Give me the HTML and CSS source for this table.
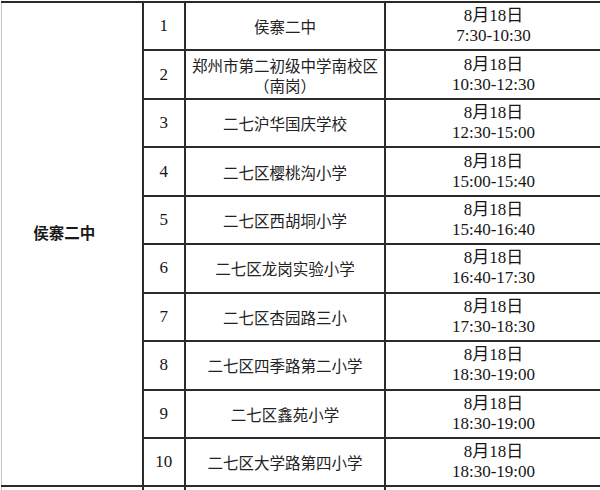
FILE: index.html
```html
<!DOCTYPE html>
<html lang="zh-CN">
<head>
<meta charset="utf-8">
<title>侯寨二中</title>
<link rel="stylesheet" href="styles.css">
</head>
<body>
<table class="sheet">
  <colgroup>
    <col class="c-area">
    <col class="c-no">
    <col class="c-school">
    <col class="c-time">
  </colgroup>
  <tbody>
    <tr>
      <td class="area" rowspan="10"><span class="area-name">侯寨二中</span></td>
      <td class="no">1</td>
      <td class="school">侯寨二中</td>
      <td class="time">8月18日<br>7:30-10:30</td>
    </tr>
    <tr>
      <td class="no">2</td>
      <td class="school">郑州市第二初级中学南校区<br>（南岗）</td>
      <td class="time">8月18日<br>10:30-12:30</td>
    </tr>
    <tr>
      <td class="no">3</td>
      <td class="school">二七沪华国庆学校</td>
      <td class="time">8月18日<br>12:30-15:00</td>
    </tr>
    <tr>
      <td class="no">4</td>
      <td class="school">二七区樱桃沟小学</td>
      <td class="time">8月18日<br>15:00-15:40</td>
    </tr>
    <tr>
      <td class="no">5</td>
      <td class="school">二七区西胡垌小学</td>
      <td class="time">8月18日<br>15:40-16:40</td>
    </tr>
    <tr>
      <td class="no">6</td>
      <td class="school">二七区龙岗实验小学</td>
      <td class="time">8月18日<br>16:40-17:30</td>
    </tr>
    <tr>
      <td class="no">7</td>
      <td class="school">二七区杏园路三小</td>
      <td class="time">8月18日<br>17:30-18:30</td>
    </tr>
    <tr>
      <td class="no">8</td>
      <td class="school">二七区四季路第二小学</td>
      <td class="time">8月18日<br>18:30-19:00</td>
    </tr>
    <tr>
      <td class="no">9</td>
      <td class="school">二七区鑫苑小学</td>
      <td class="time">8月18日<br>18:30-19:00</td>
    </tr>
    <tr>
      <td class="no">10</td>
      <td class="school">二七区大学路第四小学</td>
      <td class="time">8月18日<br>18:30-19:00</td>
    </tr>
    <tr class="next">
      <td class="area"></td>
      <td class="no"></td>
      <td class="school"></td>
      <td class="time"></td>
    </tr>
  </tbody>
</table>
</body>
</html>
```
FILE: styles.css
```css
html, body {
  margin: 0;
  padding: 0;
  background: #ffffff;
  width: 600px;
  height: 490px;
  overflow: hidden;
}

.sheet {
  border-collapse: collapse;
  table-layout: fixed;
  width: 601px;
  margin: 1px 0 0 1px;
  font-family: "Liberation Serif", "Noto Sans CJK SC", serif;
  color: #161616;
}

.c-area { width: 141px; }
.c-no { width: 42.5px; }
.c-school { width: 200px; }
.c-time { width: 217px; }

.sheet tr {
  height: 48.45px;
}

.sheet td {
  border: 2px solid #2a2a2a;
  padding: 0;
  text-align: center;
  vertical-align: middle;
}

.sheet td.area {
  border-left: 1px solid #c4c4c4;
  padding: 0 15px 24px 0;
}

.area-name {
  font-family: "Noto Sans CJK SC", sans-serif;
  font-weight: 700;
  font-size: 15.5px;
  color: #1a1a1a;
}

.no {
  font-size: 17px;
  padding-top: 3px;
}

.school {
  font-family: "Noto Sans CJK SC", sans-serif;
  font-size: 15.5px;
  line-height: 20px;
  color: #222;
  padding-top: 1px;
}

.time {
  font-size: 17px;
  line-height: 20px;
  padding-top: 6px;
}

.time, .no {
  font-family: "Liberation Serif", "Noto Sans CJK SC", serif;
}
```
